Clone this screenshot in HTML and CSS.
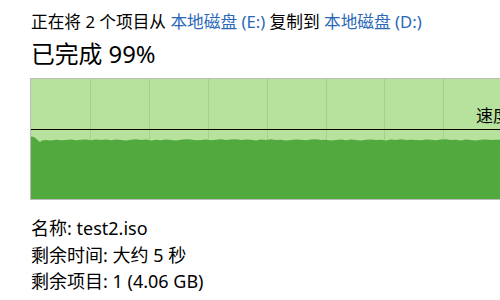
FILE: index.html
```html
<!DOCTYPE html>
<html lang="zh-CN">
<head>
<meta charset="utf-8">
<link rel="stylesheet" href="styles.css">
</head>
<body>
<div class="dialog">
  <div class="summary">正在将 2 个项目从 <span class="link">本地磁盘 (E:)</span> 复制到 <span class="link">本地磁盘 (D:)</span></div>
  <div class="progress-title">已完成 99%</div>
  <div class="chart">
    <svg class="chart-svg" width="480" height="120" viewBox="0 0 480 120">
      <rect x="0" y="0" width="480" height="120" fill="#b6e29e"/>
      <g stroke="#a2d189" stroke-width="1">
        <line x1="59.5" y1="0" x2="59.5" y2="120"/>
        <line x1="118.5" y1="0" x2="118.5" y2="120"/>
        <line x1="177.5" y1="0" x2="177.5" y2="120"/>
        <line x1="236.5" y1="0" x2="236.5" y2="120"/>
        <line x1="295.5" y1="0" x2="295.5" y2="120"/>
        <line x1="353.5" y1="0" x2="353.5" y2="120"/>
        <line x1="412.5" y1="0" x2="412.5" y2="120"/>
      </g>
      <path fill="#52aa3f" d="M0,57.5 L3,58 L5,59.5 L7,61.5 L9,63 L11,61.5 L15,61 L20,61.5 L25,60.8 L30,61.2 L35,61 L40,60.5 L45,61.3 L50,60.7 L55,60.5 L60,61.2 L65,60.4 L70,61 L75,60.6 L80,61.3 L85,60.5 L90,60.9 L95,61.4 L100,60.8 L105,60.3 L110,61 L115,60.6 L120,61.6 L125,60.7 L130,61.2 L135,60.4 L140,60.9 L145,61.5 L150,60.8 L155,60.2 L160,60.6 L165,61.3 L170,60.9 L175,60.4 L180,61.2 L185,60.7 L190,60.3 L195,61 L200,60.6 L205,60.2 L210,61.1 L215,60.5 L220,60.8 L225,61.4 L230,60.6 L235,60.9 L240,60.3 L245,61 L250,60.7 L255,61.5 L260,60.9 L265,60.4 L270,60.8 L275,61.3 L280,60.6 L285,60.3 L290,61 L295,60.7 L300,61.6 L305,60.9 L310,60.5 L315,61.2 L320,60.6 L325,60.9 L330,61.4 L335,60.7 L340,60.4 L345,61 L350,60.8 L355,61.5 L360,60.6 L365,60.9 L370,60.3 L375,61.1 L380,60.7 L385,60.9 L390,61.3 L395,60.5 L400,60.8 L405,61.2 L410,60.6 L415,60.3 L420,61 L425,60.7 L430,61.4 L435,60.6 L440,60.9 L445,61.5 L450,60.8 L455,60.5 L460,61 L465,60.7 L480,61 L480,120 L0,120 Z"/>
      <line x1="0" y1="50.5" x2="480" y2="50.5" stroke="#000" stroke-width="1"/>
      <text class="speed" x="445" y="43">速度: 310 MB/秒</text>
    </svg>
  </div>
  <div class="details">
    <div class="row">名称: test2.iso</div>
    <div class="row">剩余时间: 大约 5 秒</div>
    <div class="row">剩余项目: 1 (4.06 GB)</div>
  </div>
</div>
</body>
</html>
```
FILE: styles.css
```css
html, body {
  margin: 0;
  padding: 0;
  background: #ffffff;
  overflow: hidden;
}
body {
  width: 500px;
  height: 300px;
  font-family: "Noto Sans", "Noto Sans CJK SC", sans-serif;
  color: #000;
}
.dialog {
  padding: 11px 0 0 31px;
}
.summary {
  font-size: 16.7px;
  line-height: 22px;
  white-space: nowrap;
}
.link {
  color: #2a68b8;
}
.progress-title {
  font-size: 23.8px;
  line-height: 30px;
  margin-top: 6px;
}
.chart {
  margin-top: 9px;
  margin-left: -1px;
  width: 480px;
  border: 1px solid #bcbcbc;
  height: 120px;
}
.chart-svg {
  display: block;
}
.speed {
  font-size: 17px;
  fill: #000;
  font-family: "Noto Sans", "Noto Sans CJK SC", sans-serif;
}
.details {
  margin-top: 15px;
}
.row {
  font-size: 18px;
  line-height: 26.5px;
  white-space: nowrap;
}
```
